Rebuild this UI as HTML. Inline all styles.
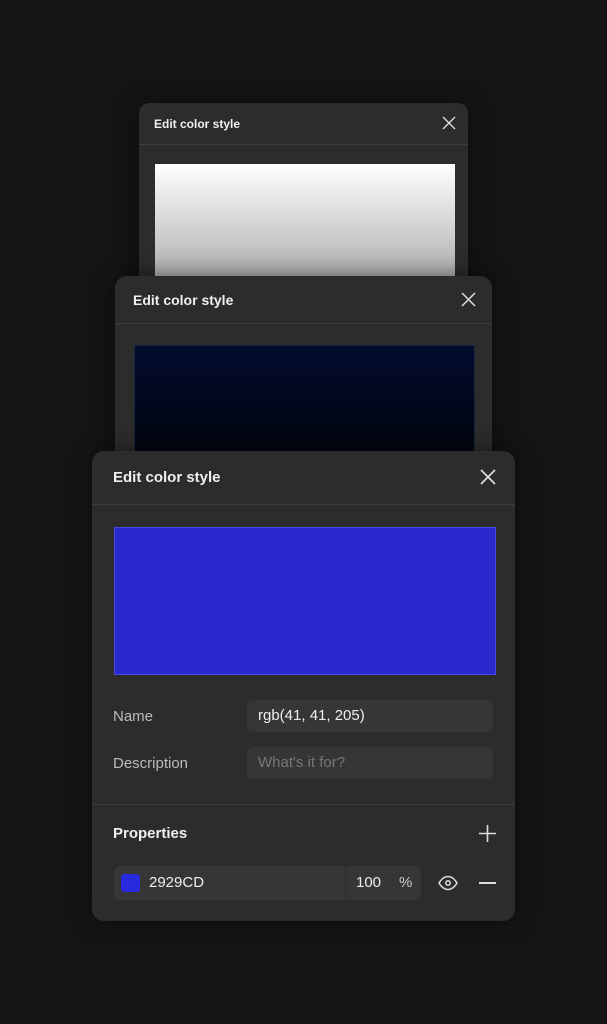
<!DOCTYPE html>
<html><head><style>
body{margin:0;width:607px;height:1024px;background:#151515;font-family:"Liberation Sans",sans-serif;position:relative;overflow:hidden}
.card{position:absolute;background:#2c2c2c;border-radius:12px;box-shadow:0 0 24px rgba(0,0,0,.5)}
.hd{position:absolute;left:0;right:0;border-bottom:1px solid #3d3d3d}
.t{position:absolute;color:#f0f0f0;font-weight:bold}
.x{position:absolute}
.in{position:absolute;background:#363636;border-radius:6px;font-size:15px}
</style></head><body>
<div class="card" style="left:139px;top:103px;width:329px;height:200px;border-radius:10px">
 <div class="hd" style="top:0;height:41px"></div>
 <div class="t" style="left:15px;top:14px;font-size:12px">Edit color style</div>
 <svg class="x" style="left:442px;left:303px;top:13px" width="14" height="14"><path d="M1 1L13 13M13 1L1 13" stroke="#ddd" stroke-width="1.4"/></svg>
 <div style="position:absolute;left:16px;top:61px;width:300px;height:120px;background:linear-gradient(#fff,#aaa)"></div>
</div>
<div class="card" style="left:115px;top:276px;width:377px;height:200px">
 <div class="hd" style="top:0;height:47px"></div>
 <div class="t" style="left:18px;top:16px;font-size:14px">Edit color style</div>
 <svg class="x" style="left:346px;top:16px" width="15" height="15"><path d="M1 1L14 14M14 1L1 14" stroke="#ddd" stroke-width="1.5"/></svg>
 <div style="position:absolute;left:19px;top:69px;width:341px;height:110px;background:linear-gradient(#020c2e,#00040e);border:1px solid #1c2440;box-sizing:border-box"></div>
</div>
<div class="card" style="left:92px;top:451px;width:423px;height:470px">
 <div class="hd" style="top:0;height:53px"></div>
 <div class="t" style="left:21px;top:18px;font-size:15px">Edit color style</div>
 <svg class="x" style="left:388px;top:18px" width="16" height="16"><path d="M1 1L15 15M15 1L1 15" stroke="#e0e0e0" stroke-width="1.6"/></svg>
 <div style="position:absolute;left:22px;top:76px;width:382px;height:148px;background:#2929cd;border:1px solid #4a4ae0;box-sizing:border-box"></div>
 <div style="position:absolute;left:21px;top:257px;color:#bbb;font-size:15px">Name</div>
 <div class="in" style="left:155px;top:249px;width:246px;height:32px"><span style="position:absolute;left:11px;top:7px;color:#eee">rgb(41, 41, 205)</span></div>
 <div style="position:absolute;left:21px;top:304px;color:#bbb;font-size:15px">Description</div>
 <div class="in" style="left:155px;top:296px;width:246px;height:32px"><span style="position:absolute;left:11px;top:7px;color:#777">What's it for?</span></div>
 <div style="position:absolute;left:0;right:0;top:353px;border-top:1px solid #3d3d3d"></div>
 <div class="t" style="left:21px;top:374px;font-size:15px">Properties</div>
 <svg class="x" style="left:387px;top:374px" width="17" height="17"><path d="M8.5 0V17M0 8.5H17" stroke="#ddd" stroke-width="1.6"/></svg>
 <div class="in" style="left:22px;top:415px;width:307px;height:34px">
  <div style="position:absolute;left:7px;top:8px;width:19px;height:18px;background:#2929e0;border-radius:3px"></div>
  <span style="position:absolute;left:35px;top:8px;color:#eee">2929CD</span>
  <div style="position:absolute;left:231px;top:0;width:1px;height:34px;background:#2c2c2c"></div>
  <span style="position:absolute;left:242px;top:8px;color:#eee">100</span>
  <span style="position:absolute;left:285px;top:8px;color:#ccc">%</span>
 </div>
 <svg class="x" style="left:346px;top:424px" width="20" height="16"><path d="M1 8C4 3 7 1.5 10 1.5S16 3 19 8C16 13 13 14.5 10 14.5S4 13 1 8Z" fill="none" stroke="#ddd" stroke-width="1.5"/><circle cx="10" cy="8" r="2.2" fill="none" stroke="#ddd" stroke-width="1.5"/></svg>
 <div style="position:absolute;left:387px;top:431px;width:17px;height:1.6px;background:#ddd"></div>
</div>
</body></html>
